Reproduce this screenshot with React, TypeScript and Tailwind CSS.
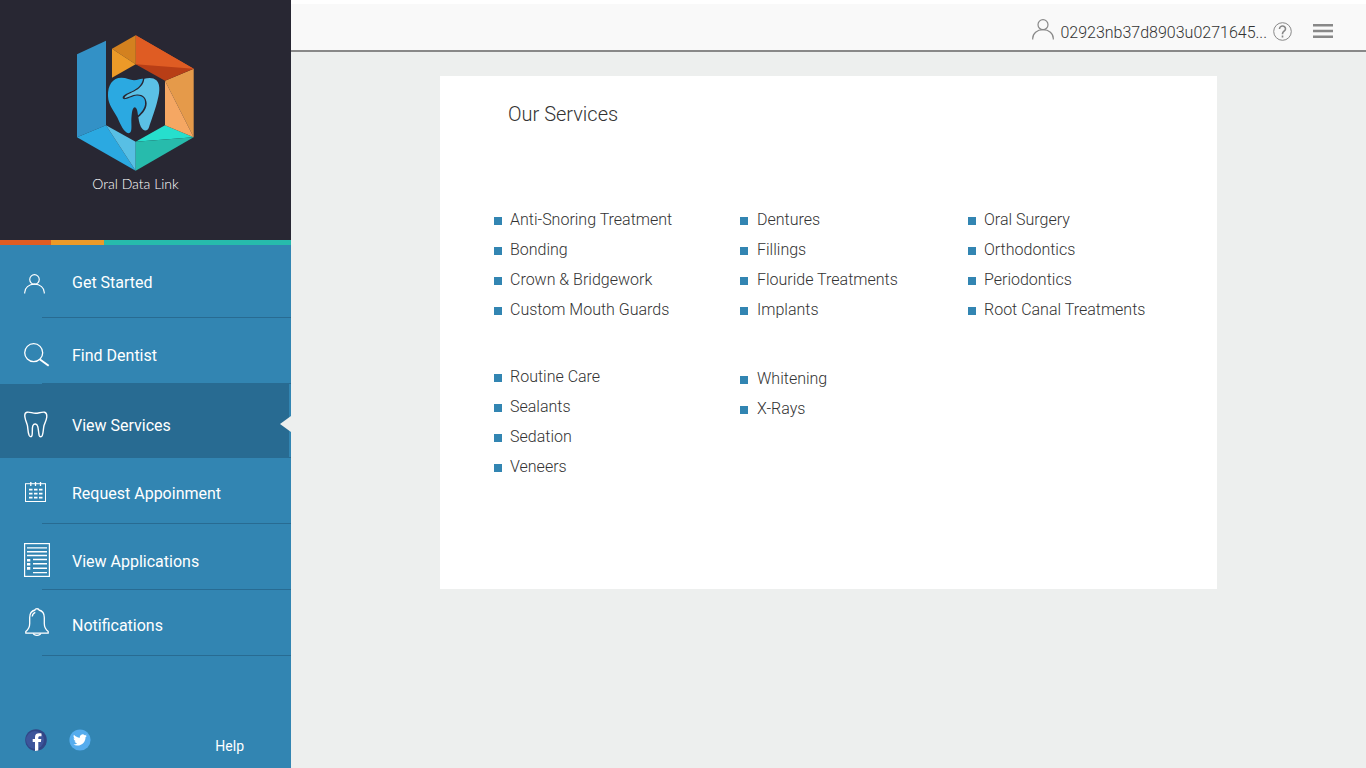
import React from 'react';
import type { ReactNode } from 'react';

function Logo() {
  return (
    <svg viewBox="48 27 357 413" className="h-[138px] w-[119px]" role="img" aria-label="Tooth inside a hexagon">
      <polygon points="51,87 138,47 138,300 51,336" fill="#3391c6" />
      <polygon points="51,336 138,300 227,437" fill="#2ba9e1" />
      <polygon points="138,300 227,350 227,437" fill="#58bfe4" />
      <polygon points="227,350 315,300 401,336" fill="#26dfcd" />
      <polygon points="227,350 401,336 227,437" fill="#27bbac" />
      <polygon points="315,167 401,131 401,336" fill="#e59a4a" />
      <polygon points="315,167 401,336 315,300" fill="#f5a763" />
      <polygon points="227,30 401,131 227,117" fill="#df5c23" />
      <polygon points="227,30 401,131 315,150 227,117" fill="#df5c23" />
      <polygon points="227,117 401,131 315,167" fill="#b83e16" />
      <polygon points="156,71 227,30 227,117" fill="#d3811f" />
      <polygon points="156,71 227,117 156,158" fill="#ec9a28" />
      <path
        d="M144 213C143 180 158 158 184 158C200 158 210 165 222 165C234 165 240 160 249 161C247 176 237 187 222 195C208 203 187 208 188 218C191 230 212 213 231 211C250 211 257 222 255 238C253 252 243 263 234 271C233 258 230 246 224 246C216 247 215 268 214 286C214 303 217 324 206 324C192 323 182 299 172 277C161 255 145 240 144 213Z"
        fill="#2ba9e1"
      />
      <path
        d="M253 161C265 157 280 156 290 166C303 181 298 207 291 232C283 261 272 291 267 306C263 317 255 318 248 312C240 304 237 290 235 276C250 263 260 251 260 234C259 216 247 207 231 208C216 209 205 217 194 219C193 212 207 206 222 199C239 191 251 179 253 161Z"
        fill="#5bc0e5"
      />
    </svg>
  );
}

function PersonIcon({ className }: { className: string }) {
  return (
    <svg viewBox="0 0 22 21" className={className} fill="none" stroke="currentColor" strokeWidth="1.2" aria-hidden="true">
      <circle cx="11" cy="5.7" r="5" />
      <path d="M.7 20.6V19.5C.7 14.5 5 10.7 11 10.7S21.3 14.5 21.3 19.5V20.6" />
    </svg>
  );
}

function SearchIcon() {
  return (
    <svg viewBox="0 0 26 24" className="h-6 w-[26px]" fill="none" stroke="currentColor" strokeWidth="1.3" aria-hidden="true">
      <circle cx="9.7" cy="9.7" r="9" />
      <path d="M16 16.5L24.7 22.7" strokeWidth="2" />
    </svg>
  );
}

function ToothIcon() {
  return (
    <svg viewBox="0 0 24 27" className="mb-px h-[27px] w-6" fill="none" stroke="currentColor" strokeWidth="1.4" strokeLinejoin="round" aria-hidden="true">
      <path d="M3 1.2C5.5 .6 8.5 2.3 11.5 2.3S17.5 .7 20.5 1.2C22.6 1.7 23 4 22.7 6.5C22.4 9 20.8 12 20 14.5C19.2 18 19.4 22 18.3 24.5C17.6 26.2 15.7 26.2 15.2 24.5C14.4 21.5 14.5 17.5 13.6 15C12.8 12.4 9.9 12.3 8.8 14.8C7.9 17.5 8.7 22 8 24.5C7.5 26.2 5.9 26 5.1 24.3C3.9 21.5 3.9 17.5 3.5 14.8C2.8 12 1.4 9.2 1 6.5C.5 4 .8 1.7 3 1.2Z" />
    </svg>
  );
}

function CalendarIcon() {
  return (
    <svg viewBox="0 0 21 20" className="mb-[2px] ml-px h-5 w-[21px]" fill="none" stroke="currentColor" aria-hidden="true">
      <rect x=".5" y="1.7" width="20" height="17.8" />
      <path d="M5.8 0V4M10.5 0V4M15.5 0V4" strokeWidth="1.3" />
      <path d="M4 7.6H17.5M4 11.6H17.5M4 15.6H17.5" strokeWidth="1.6" strokeDasharray="3.5 1.5" />
    </svg>
  );
}

function DocumentIcon() {
  return (
    <svg viewBox="0 0 26 34" className="mb-[2px] h-[34px] w-[26px]" fill="none" stroke="currentColor" aria-hidden="true">
      <rect x=".6" y=".6" width="24.8" height="32.8" strokeWidth="1.2" />
      <path d="M3 4.9H23M3 8.7H23M3 12.5H23M9 16.5H23M9 20.7H23M9 25.3H23M9 29.6H23" strokeWidth="1.4" />
      <path d="M3 17.2H6.3M3 21.2H6.3M3 25.4H6.3" strokeWidth="2.6" />
    </svg>
  );
}

function BellIcon() {
  return (
    <svg viewBox="0 0 24 28" className="mb-[6px] ml-px h-7 w-6" fill="none" stroke="currentColor" strokeWidth="1.3" strokeLinejoin="round" aria-hidden="true">
      <path d="M10 2C10 .3 14 .3 14 2C17.8 3 19.3 6 19.3 9.5V15.5C19.3 18.7 20.2 21.2 23.2 23.4V25.2H.8V23.4C3.7 21.2 4.7 18.7 4.7 15.5V9.5C4.7 6 6.2 3 10 2Z" />
      <path d="M8.2 25.4C9 28 15 28 15.8 25.4M7.2 8.5C7.5 6.5 8.5 5 10.3 4.4" />
    </svg>
  );
}

type NavEntry = { label: string; icon: ReactNode; size: string; active?: boolean };

const navEntries: NavEntry[] = [
  { label: 'Get Started', icon: <PersonIcon className="mt-1 h-5 w-[21px]" />, size: 'h-[73px]' },
  { label: 'Find Dentist', icon: <SearchIcon />, size: 'h-[66px] pt-2' },
  { label: 'View Services', icon: <ToothIcon />, size: 'h-[74px] pt-2', active: true },
  { label: 'Request Appoinment', icon: <CalendarIcon />, size: 'h-[66px] pt-1' },
  { label: 'View Applications', icon: <DocumentIcon />, size: 'h-[66px] pt-2' },
  { label: 'Notifications', icon: <BellIcon />, size: 'h-[66px] pt-1' },
];

function NavItem({ label, icon, size, active }: NavEntry) {
  return (
    <li className="relative">
      <div className={active ? 'mr-[2px] bg-[#286b92]' : ''}>
        <a
          href="#"
          aria-current={active ? 'page' : undefined}
          className={`-mb-px flex items-center pl-6 text-base ${size}`}
        >
          <span className="flex w-12 shrink-0">{icon}</span>
          <span className="pt-[2px]">{label}</span>
        </a>
      </div>
      <div className="ml-[42px] h-px bg-[#286b92]" />
      {active && (
        <svg viewBox="0 0 11 16" className="absolute top-8 right-0 h-4 w-[11px]" aria-hidden="true">
          <path d="M11 0V16L0 8Z" fill="#edefee" />
        </svg>
      )}
    </li>
  );
}

function Sidebar() {
  return (
    <aside className="flex w-[291px] shrink-0 flex-col bg-[#3285b2] text-white">
      <div className="flex h-60 flex-col items-center bg-[#282733] pt-[34px]">
        <div className="pr-5">
          <Logo />
        </div>
        <p className="pt-[2px] pr-5 font-['Lato',sans-serif] text-sm font-light">Oral Data Link</p>
      </div>
      <div className="flex h-[5px] bg-[#27bbac]">
        <div className="w-[51px] bg-[#df5c23]" />
        <div className="w-[53px] bg-[#ec9a28]" />
      </div>
      <nav>
        <ul>
          {navEntries.map((entry) => (
            <NavItem key={entry.label} {...entry} />
          ))}
        </ul>
      </nav>
      <div className="mt-auto flex items-center pr-[47px] pb-[9px] pl-[25px]">
        <a href="#" aria-label="Facebook" className="mb-2">
          <svg viewBox="0 0 22 22" className="size-[22px]">
            <circle cx="11" cy="11" r="10.8" fill="#314686" />
            <circle cx="10" cy="11" r="9" fill="#3d559b" />
            <path d="M10 22V13H7.7V10H10V8C10 5.2 11.8 4.2 14 4.2C15 4.2 16 4.3 16.5 4.5V7.2H15C13.6 7.2 13.3 7.8 13.3 8.8V10H16.3L15.9 13H13.3V21.5Z" fill="#fff" />
          </svg>
        </a>
        <a href="#" aria-label="Twitter" className="mb-2 ml-[22px]">
          <svg viewBox="0 0 22 22" className="size-[22px]">
            <circle cx="11" cy="11" r="10.6" fill="#55acee" />
            <path
              transform="translate(4 4) scale(.58)"
              d="M23.95 4.57a10 10 0 0 1-2.82.77 4.96 4.96 0 0 0 2.16-2.72c-.95.55-2 .95-3.13 1.18a4.92 4.92 0 0 0-8.38 4.48C7.69 8.09 4.07 6.13 1.64 3.16a4.82 4.82 0 0 0-.67 2.48c0 1.71.87 3.21 2.19 4.1a4.9 4.9 0 0 1-2.23-.62v.06a4.92 4.92 0 0 0 3.95 4.83 5 5 0 0 1-2.21.08 4.94 4.94 0 0 0 4.6 3.42A9.87 9.87 0 0 1 0 19.54a13.99 13.99 0 0 0 7.56 2.21c9.05 0 14-7.5 14-13.98 0-.21 0-.42-.02-.63a9.94 9.94 0 0 0 2.46-2.55z"
              fill="#fff"
            />
          </svg>
        </a>
        <a href="#" className="mt-1 ml-auto text-sm">
          Help
        </a>
      </div>
    </aside>
  );
}

function TopBar() {
  return (
    <header className="flex h-[52px] items-center justify-end border-t-4 border-b-2 border-t-white border-b-[#888] bg-[#f9f9f9] pt-2 pr-8 text-[#888]">
      <PersonIcon className="mb-1 h-[21px] w-[22px]" />
      <span className="ml-[6px] pt-[3px] text-base font-light text-[#333]">02923nb37d8903u0271645...</span>
      <button type="button" aria-label="Help" className="ml-[6px]">
        <svg viewBox="0 0 19 19" className="size-[19px]" fill="none" stroke="currentColor">
          <circle cx="9.5" cy="9.5" r="8.8" />
          <path d="M6.5 7C6.5 2.9 12.7 3.2 12.5 7C12.4 9.2 9.5 9.2 9.5 11.8V12.3M9.5 13.6V15.4" strokeWidth="1.6" />
        </svg>
      </button>
      <button type="button" aria-label="Menu" className="ml-[21px]">
        <svg viewBox="0 0 21 14" className="h-[14px] w-[21px]" stroke="currentColor" strokeWidth="2.4">
          <path d="M0 1.2H20M0 7H20M0 12.8H20" />
        </svg>
      </button>
    </header>
  );
}

function ServiceList({ items, gap = 'gap-[9px]' }: { items: string[]; gap?: string }) {
  return (
    <ul>
      {items.map((item) => (
        <li key={item} className={`flex h-[30px] items-center ${gap}`}>
          <span className="mt-[2px] size-2 shrink-0 bg-[#3285b2]" />
          {item}
        </li>
      ))}
    </ul>
  );
}

export default function App() {
  return (
    <div className="flex min-h-screen bg-[#edefee] font-['Roboto',sans-serif]">
      <Sidebar />
      <div className="min-w-0 flex-1">
        <TopBar />
        <main className="px-6 pt-6 pb-6">
          <section className="mx-auto max-w-[777px] bg-white pt-6 pb-[107px] pl-[54px] font-light text-[#333]">
            <h1 className="pl-[14px] text-xl leading-7">Our Services</h1>
            <div className="grid grid-cols-[246px_228px_auto] gap-y-[37px] pt-[77px] text-base">
              <ServiceList gap="gap-2" items={['Anti-Snoring Treatment', 'Bonding', 'Crown & Bridgework', 'Custom Mouth Guards']} />
              <ServiceList items={['Dentures', 'Fillings', 'Flouride Treatments', 'Implants']} />
              <ServiceList gap="gap-2" items={['Oral Surgery', 'Orthodontics', 'Periodontics', 'Root Canal Treatments']} />
              <ServiceList gap="gap-2" items={['Routine Care', 'Sealants', 'Sedation', 'Veneers']} />
              <div className="pt-[2px]">
                <ServiceList items={['Whitening', 'X-Rays']} />
              </div>
            </div>
          </section>
        </main>
      </div>
    </div>
  );
}
